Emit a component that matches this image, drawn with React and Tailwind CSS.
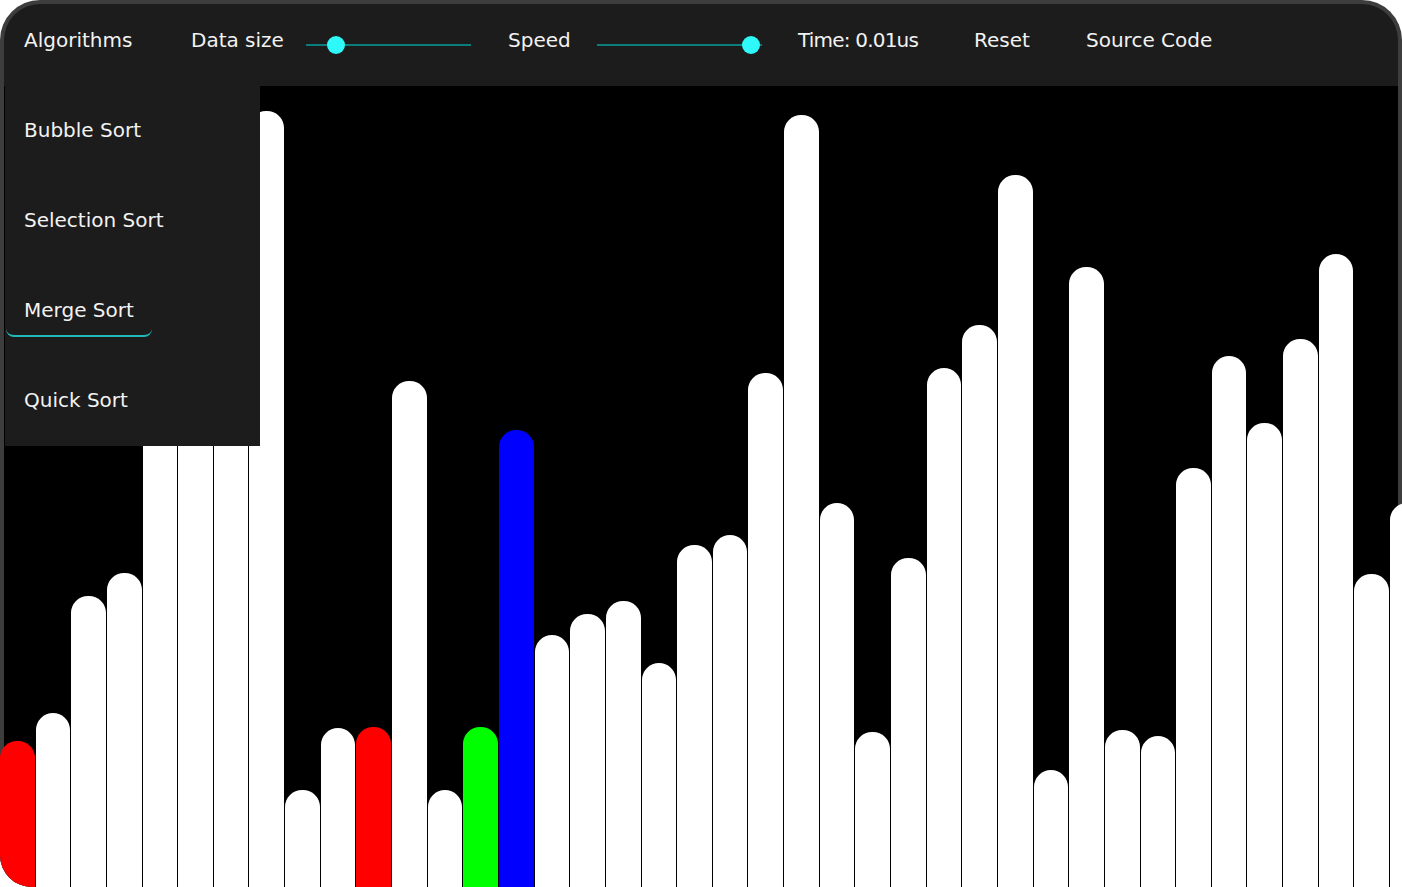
import React from "react";

const tops = [
  741, 713, 596, 573, 330, 250, 190, 111, 790, 728, 727, 381, 790, 727, 430,
  635, 614, 601, 663, 545, 535, 373, 115, 503, 732, 558, 368, 325, 175, 770,
  267, 730, 736, 468, 356, 423, 339, 254, 574, 503,
];

const colors = { 0: "bg-[#ff0000]", 10: "bg-[#ff0000]", 13: "bg-[#00ff00]", 14: "bg-[#0000ff]" };

const algos = ["Bubble Sort", "Selection Sort", "Merge Sort", "Quick Sort"];

function Slider({ pos }) {
  return (
    <div className="relative h-[18px] w-[165px] mt-[10px]">
      <div className="absolute left-0 right-0 top-[8px] h-[2px] bg-[#0a7d7d]" />
      <div
        className="absolute top-0 h-[18px] w-[18px] rounded-full bg-[#2ff8f8]"
        style={{ left: pos - 9 }}
      />
    </div>
  );
}

export default function App() {
  return (
    <div
      className="relative w-[1402px] h-[887px] bg-white overflow-hidden text-[#f2f2f2]"
      style={{ fontFamily: '"DejaVu Sans", "Open Sans", sans-serif' }}
    >
      {/* barra superior */}
      <nav className="h-[86px] bg-[#1c1c1c] border-x-4 border-t-4 border-[#3d3d3d] rounded-t-[40px] flex items-center pl-[20px] pb-[10px] text-[20px] leading-none">
        <div className="w-[167px]">Algorithms</div>
        <div className="w-[115px]">Data size</div>
        <div className="w-[202px] flex items-center">
          <Slider pos={30} />
        </div>
        <div className="w-[89px]">Speed</div>
        <div className="w-[201px] flex items-center">
          <Slider pos={154} />
        </div>
        <div className="w-[176px] tracking-[-0.8px]">Time: 0.01us</div>
        <div className="w-[112px]">Reset</div>
        <div>Source Code</div>
      </nav>

      {/* barras */}
      <div className="relative h-[801px] bg-black rounded-bl-[32px] overflow-hidden shadow-[inset_4px_0_0_#3d3d3d,inset_-4px_0_0_#3d3d3d]">
        <div className="flex items-end gap-px h-full w-[1440px]">
          {tops.map((t, i) => (
            <div
              key={i}
              className={`w-[34.65px] shrink-0 rounded-t-[17px] ${colors[i] || "bg-white"}`}
              style={{ height: 887 - t }}
            />
          ))}
        </div>
      </div>

      {/* menu de algoritmos */}
      <div className="absolute left-[5px] top-[86px] w-[255px] h-[360px] bg-[#1c1c1c] pl-px text-[20px]">
        {algos.map((a) => (
          <div key={a} className="h-[90px] flex items-center">
            <span
              className={`inline-block px-[18px] py-[12px] leading-[26px] rounded-[8px] border-b-2 ${
                a === "Merge Sort" ? "border-[#22b8b8]" : "border-transparent"
              }`}
            >
              {a}
            </span>
          </div>
        ))}
      </div>
    </div>
  );
}
